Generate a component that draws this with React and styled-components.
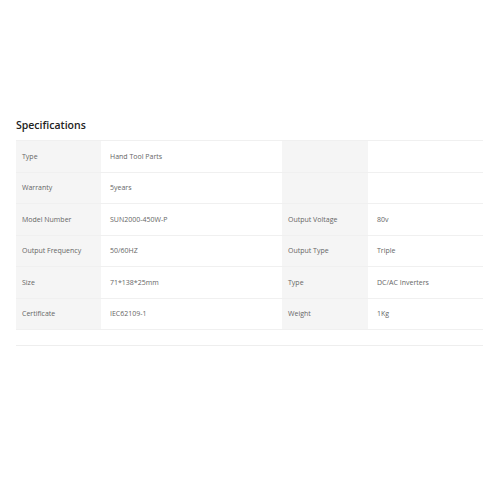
import styled, { createGlobalStyle } from 'styled-components'

const GlobalStyle = createGlobalStyle`
  body {
    margin: 0;
    background: #fff;
    font-family: "Open Sans", "Liberation Sans", sans-serif;
  }
`

const Page = styled.div`
  width: 500px;
  height: 489px;
  padding: 118px 17px 0 16px;
  box-sizing: border-box;
`

const Title = styled.h2`
  margin: 0 0 7px;
  font-size: 10.5px;
  font-weight: 600;
  color: #222;
  line-height: 15px;
`

const Table = styled.div`
  display: grid;
  grid-template-columns: 85px 181px 86px 1fr;
  border-top: 1px solid #f0f0f0;
`

const Cell = styled.div`
  height: 30.5px;
  display: flex;
  align-items: center;
  padding-left: ${p => (p.$label ? '6px' : '9px')};
  background: ${p => (p.$label ? '#f5f5f5' : '#fff')};
  border-bottom: 1px solid #f0f0f0;
  font-size: 7px;
  color: #666;
  white-space: nowrap;
`

const Divider = styled.div`
  margin-top: 15px;
  border-top: 1px solid #eee;
`

const rows = [
  ['Type', 'Hand Tool Parts', '', ''],
  ['Warranty', '5years', '', ''],
  ['Model Number', 'SUN2000-450W-P', 'Output Voltage', '80v'],
  ['Output Frequency', '50/60HZ', 'Output Type', 'Triple'],
  ['Size', '71*138*25mm', 'Type', 'DC/AC Inverters'],
  ['Certificate', 'IEC62109-1', 'Weight', '1Kg'],
]

export default function App() {
  return (
    <>
      <GlobalStyle />
      <Page>
        <Title>Specifications</Title>
        <Table>
          {rows.map((r, i) => [
            <Cell key={i + 'a'} $label>{r[0]}</Cell>,
            <Cell key={i + 'b'}>{r[1]}</Cell>,
            <Cell key={i + 'c'} $label>{r[2]}</Cell>,
            <Cell key={i + 'd'}>{r[3]}</Cell>,
          ])}
        </Table>
        <Divider />
      </Page>
    </>
  )
}
